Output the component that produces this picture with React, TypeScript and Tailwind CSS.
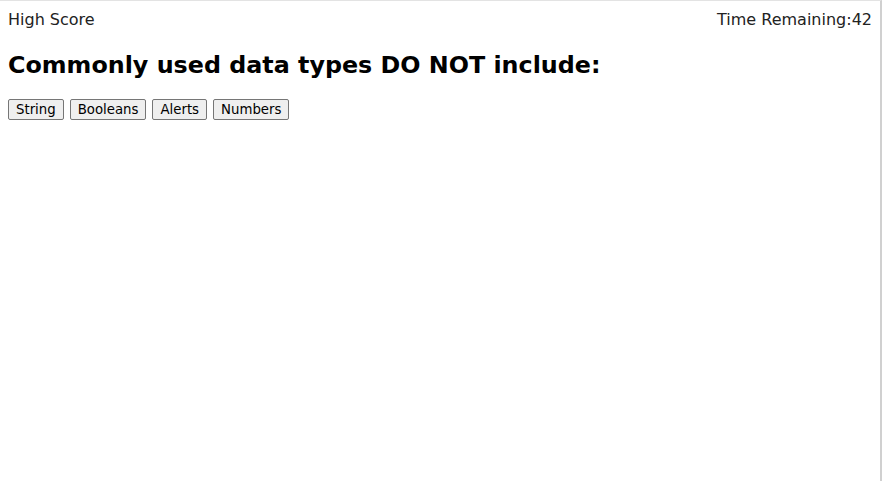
import React from 'react';

const choices = ['String', 'Booleans', 'Alerts', 'Numbers'];

const App: React.FC = () => {
  return (
    <div className="h-[481px] w-[882px] bg-white border-t border-t-[#e3e3e3] border-r-2 border-r-[#d0d0d0] text-black font-['DejaVu_Sans',Verdana,sans-serif]">
      {/* Header */}
      <div className="flex justify-between px-2 pt-[9px] text-[16px] leading-[20px] text-[#222]">
        <span>High Score</span>
        <span>Time Remaining:42</span>
      </div>

      {/* Question */}
      <div className="px-2">
        <h1 className="mt-[19px] text-[23.8px] font-bold leading-[32px]">Commonly used data types DO NOT include:</h1>
        <div className="mt-[18px] flex gap-[6px]">
          {choices.map((c) => (
            <button
              key={c}
              className="h-[21px] px-[7px] text-[13.3px] leading-none text-black bg-[#efefef] border border-[#767676] rounded-[2px]"
            >
              {c}
            </button>
          ))}
        </div>
      </div>
    </div>
  );
};

export default App;
